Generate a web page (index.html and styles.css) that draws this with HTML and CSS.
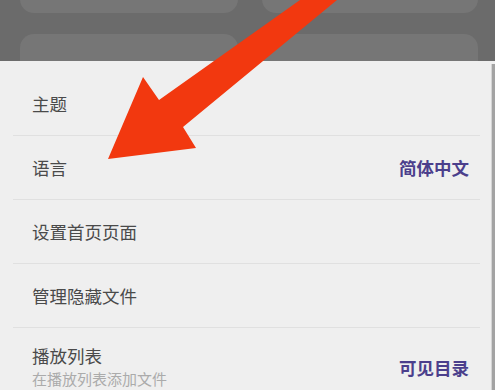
FILE: index.html
```html
<!DOCTYPE html>
<html>
  <head>
    <meta http-equiv="Content-Type" content="text/html; charset=utf-8">
    <link rel="stylesheet" href="styles.css">
  </head>
  <body>
    <div class="backdrop">
      <div class="cards">
        <div class="card"></div>
        <div class="card"></div>
        <div class="card"></div>
        <div class="card"></div>
      </div>
    </div>

    <div class="sheet">
      <div class="row"><span class="label">主题</span></div>
      <div class="row"><span class="label">语言</span><span class="value">简体中文</span></div>
      <div class="row"><span class="label">设置首页页面</span></div>
      <div class="row"><span class="label">管理隐藏文件</span></div>
      <div class="row tall">
        <div class="text">
          <span class="label">播放列表</span>
          <span class="sub">在播放列表添加文件</span>
        </div>
        <span class="value">可见目录</span>
      </div>
      <div class="scrollbar"></div>
    </div>

    <svg class="arrow" width="495" height="390" viewBox="0 0 495 390">
      <polygon points="300,0 337,0 183,127 196,148 108,159 143,77 159,100" fill="#f2380f"/>
    </svg>
  </body>
</html>
```

FILE: styles.css
```css
html, body { margin: 0; padding: 0; }
body { width: 495px; height: 390px; overflow: hidden; position: relative; background: #efefef; font-family: "Noto Sans CJK SC", "Noto Sans", sans-serif; }

.backdrop { height: 61px; overflow: hidden; background: #6b6b6b; }
.cards { display: grid; grid-template-columns: 218px 216px; gap: 21px 24px; padding: 0 17px 0 20px; margin-top: -50px; }
.card { height: 63px; border-radius: 14px; background: #767676; }

.sheet { position: relative; background: #efefef; padding-top: 11px; }
.row { display: flex; align-items: center; justify-content: space-between; height: 63px; margin: 0 15px 0 13px; padding: 0 11px 0 19px; border-bottom: 1px solid #e0e0e0; }
.row.tall { height: 80px; border-bottom: none; }
.label { color: #4a4a4a; font-size: 17.5px; line-height: 20px; }
.value { color: #4b3f8c; font-size: 17.5px; font-weight: 700; line-height: 20px; }
.text { display: flex; flex-direction: column; gap: 3px; margin-top: -2px; }
.sub { color: #ababab; font-size: 15px; line-height: 20px; }

.scrollbar { position: absolute; top: 3px; right: 0; width: 3px; height: 400px; background: #a3a3a3; border-left: 1px solid #d4d4d4; }

.arrow { position: absolute; left: 0; top: 0; pointer-events: none; }
```
